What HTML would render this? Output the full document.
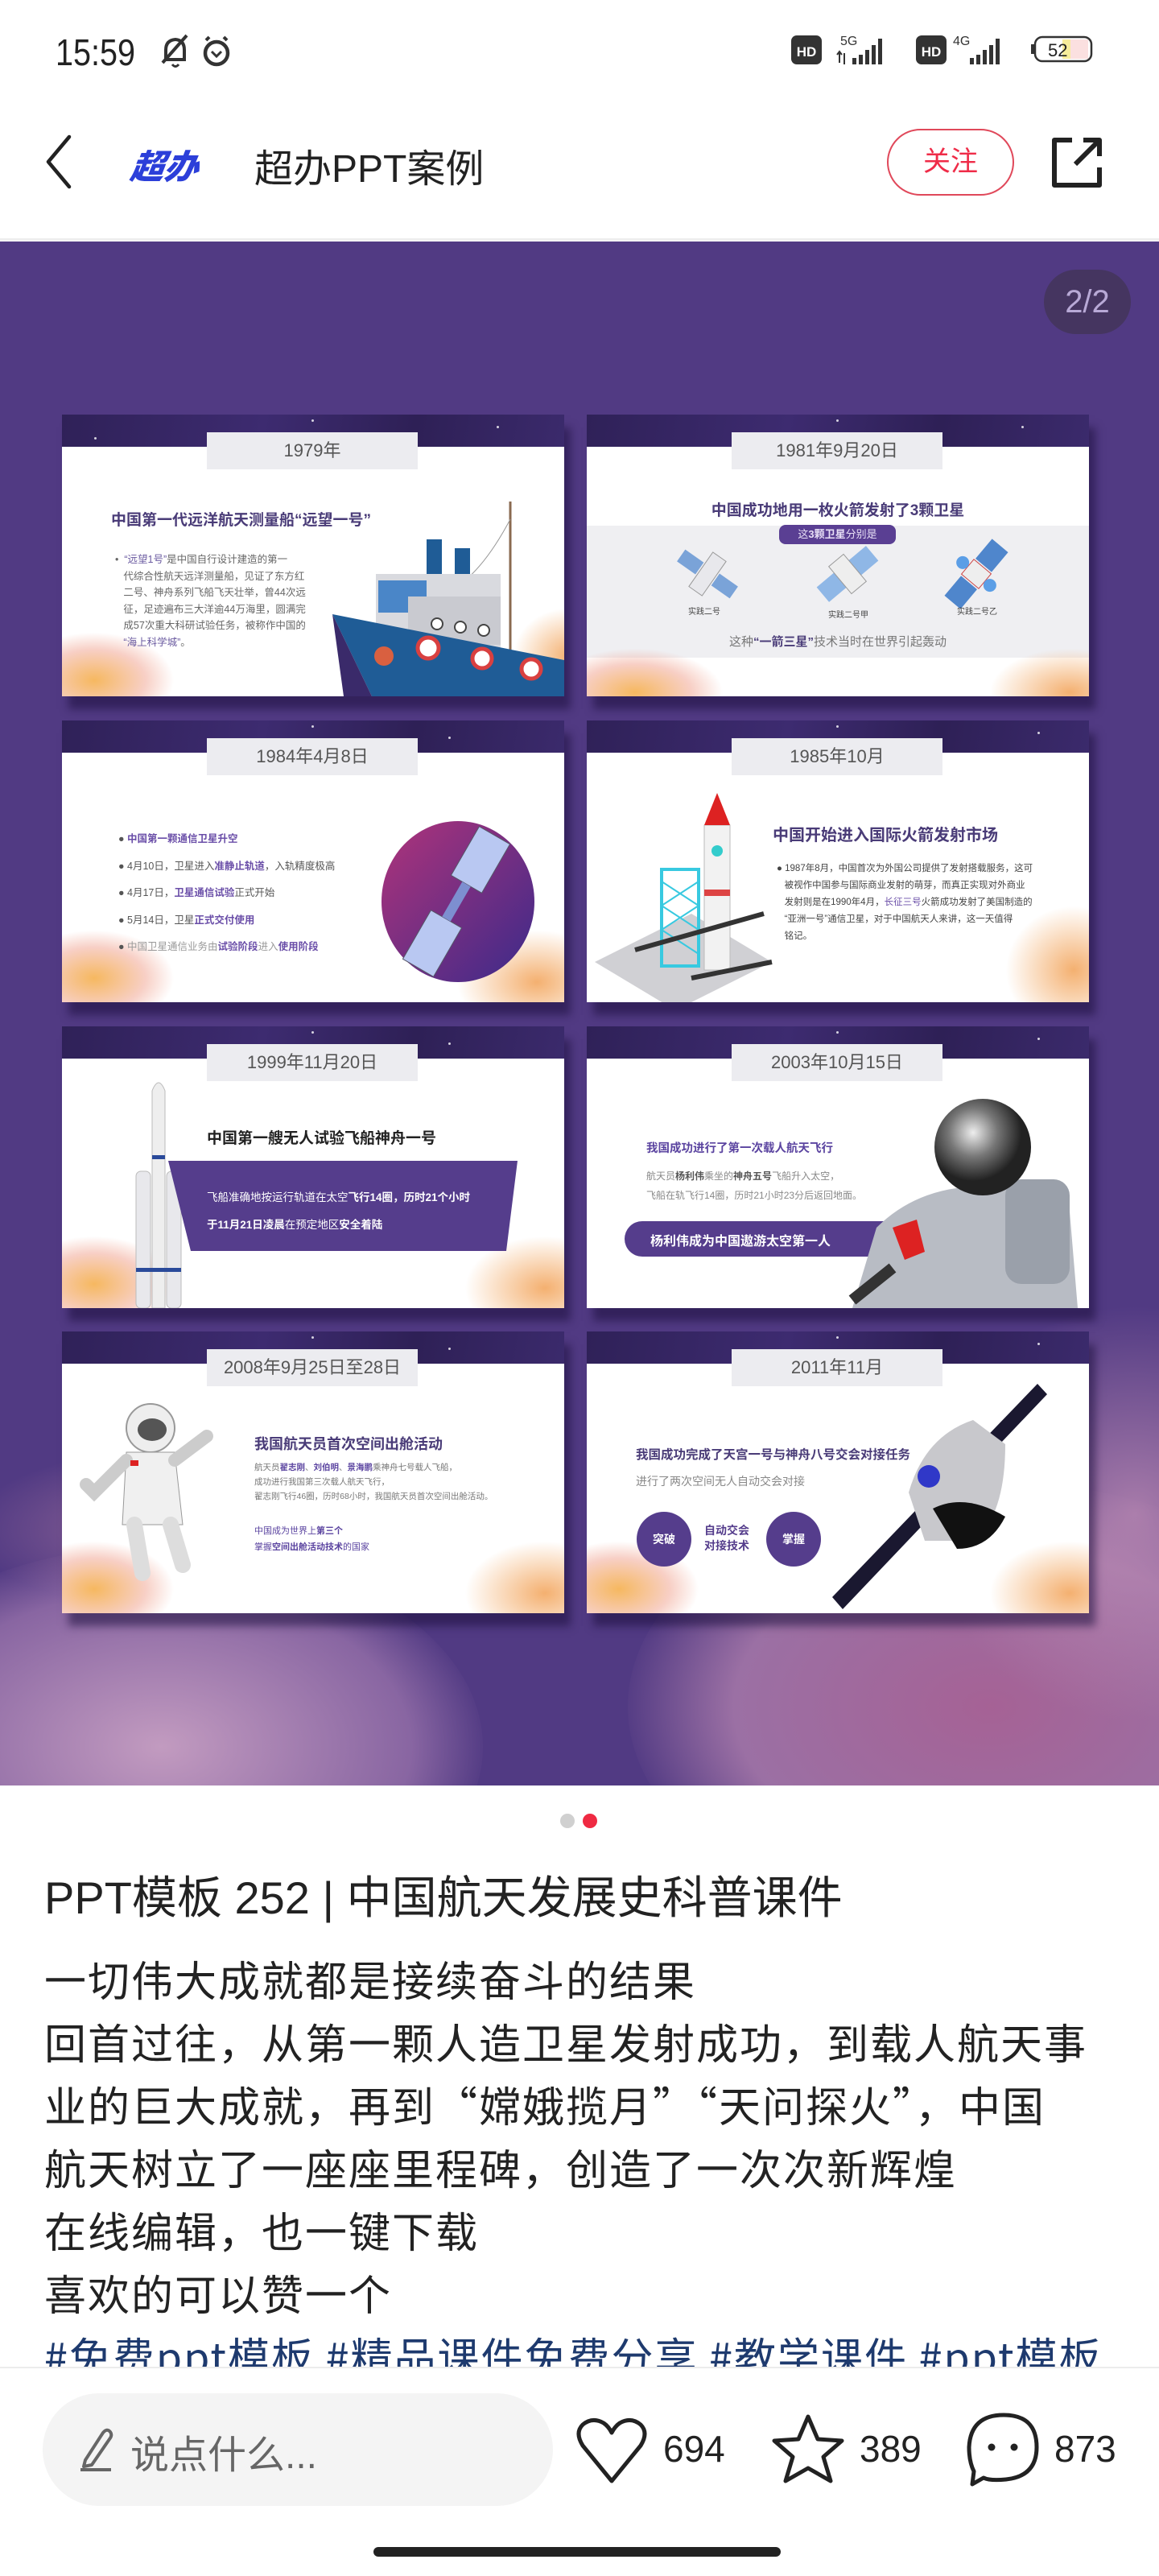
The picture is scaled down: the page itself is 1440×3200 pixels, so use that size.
<!DOCTYPE html>
<html><head><meta charset="utf-8">
<style>
*{margin:0;padding:0;box-sizing:border-box}
body{width:1440px;height:3200px;position:relative;background:#fff;font-family:"Liberation Sans","Noto Sans CJK SC",sans-serif;overflow:hidden;color:#222}
.a{position:absolute}
.s{position:absolute;width:624px;height:350px;background:#fff;box-shadow:8px 16px 10px rgba(28,14,60,.55);overflow:hidden}
.band{position:absolute;left:0;top:0;width:624px;height:40px;background:linear-gradient(100deg,#2f2158,#3d2b70 40%,#2e2056 70%,#3b2a6c)}
.st{position:absolute;width:3px;height:3px;border-radius:50%;background:#fff;opacity:.8}
.lbl{position:absolute;left:180px;top:22px;width:262px;height:46px;background:#ececf0;color:#555;font-size:22px;text-align:center;line-height:46px}
.cl{position:absolute;border-radius:50%}
.t{position:absolute;white-space:nowrap}
.pt{font-weight:bold;color:#4a3c78}
.g{color:#666}
</style></head><body>

<!-- status bar -->
<div class="t" style="left:69px;top:38px;font-size:46px;color:#222;transform:scaleX(.86);transform-origin:left">15:59</div>
<svg class="a" style="left:196px;top:40px" width="96" height="48" viewBox="0 0 96 48">
 <path d="M10 34 L10 22 Q10 10 22 9 Q33 10 33 22 L33 34 Z" fill="none" stroke="#333" stroke-width="4"/>
 <path d="M6 38 L36 4" stroke="#333" stroke-width="4"/><path d="M18 40 Q22 45 26 40" fill="none" stroke="#333" stroke-width="3"/>
 <circle cx="73" cy="26" r="14" fill="none" stroke="#333" stroke-width="4.5"/><path d="M67 24 L73 30 L79 24" fill="none" stroke="#333" stroke-width="3"/>
 <path d="M60 10 L64 6 M86 10 L82 6" stroke="#333" stroke-width="4"/>
</svg>
<svg class="a" style="left:980px;top:38px" width="390" height="50" viewBox="0 0 390 50">
 <rect x="3" y="6" width="38" height="36" rx="7" fill="#333"/><text x="22" y="32" font-size="17" font-weight="bold" fill="#fff" text-anchor="middle" font-family="Liberation Sans">HD</text>
 <text x="64" y="18" font-size="16" fill="#333" font-family="Liberation Sans">5G</text>
 <rect x="79" y="34" width="5" height="8" fill="#333"/><rect x="87" y="30" width="5" height="12" fill="#333"/><rect x="95" y="24" width="5" height="18" fill="#333"/><rect x="103" y="18" width="5" height="24" fill="#333"/><rect x="111" y="10" width="5" height="32" fill="#333"/>
 <path d="M63 26 L63 40 M60 30 L63 26 L66 30 M69 28 L69 42" stroke="#333" stroke-width="2" fill="none"/>
 <rect x="158" y="6" width="38" height="36" rx="7" fill="#333"/><text x="177" y="32" font-size="17" font-weight="bold" fill="#fff" text-anchor="middle" font-family="Liberation Sans">HD</text>
 <text x="204" y="18" font-size="16" fill="#333" font-family="Liberation Sans">4G</text>
 <rect x="225" y="34" width="5" height="8" fill="#333"/><rect x="233" y="30" width="5" height="12" fill="#333"/><rect x="241" y="24" width="5" height="18" fill="#333"/><rect x="249" y="18" width="5" height="24" fill="#333"/><rect x="257" y="10" width="5" height="32" fill="#333"/>
 <rect x="306" y="8" width="70" height="30" rx="9" fill="none" stroke="#333" stroke-width="2.5"/>
 <rect x="340" y="11" width="10" height="24" fill="#f6ec9a"/><rect x="350" y="11" width="22" height="24" fill="#fbe0e0"/>
 <rect x="301" y="17" width="4" height="12" fill="#333"/>
 <text x="322" y="32" font-size="22" fill="#222" font-family="Liberation Sans">52</text>
</svg>

<!-- nav -->
<svg class="a" style="left:50px;top:166px" width="44" height="70"><path d="M36 4 L10 35 L36 66" fill="none" stroke="#222" stroke-width="4.5" stroke-linecap="round" stroke-linejoin="round"/></svg>
<div class="t" style="left:163px;top:174px;font-size:42px;font-weight:900;font-style:italic;color:#2c3fd9;transform:skewX(-8deg)">超办</div>
<div class="t" style="left:316px;top:170px;font-size:48px;color:#222">超办PPT案例</div>
<div class="a" style="left:1102px;top:160px;width:158px;height:83px;border:2px solid #e0485a;border-radius:42px;color:#ef2c48;font-size:34px;text-align:center;line-height:79px">关注</div>
<svg class="a" style="left:1302px;top:166px" width="72" height="72" viewBox="0 0 72 72"><path d="M30 8 L8 8 L8 64 L64 64 L64 42" fill="none" stroke="#222" stroke-width="6" stroke-linejoin="round"/><path d="M34 38 L64 8 M44 8 L64 8 L64 28" fill="none" stroke="#222" stroke-width="6" stroke-linejoin="round"/></svg>
<div class="a" style="left:0;top:296px;width:1440px;height:3px;background:#eee"></div>

<!-- image -->
<div class="a" style="left:0;top:300px;width:1440px;height:1918px;background:#513a83;overflow:hidden">
 <div class="cl" style="left:-200px;top:1620px;width:800px;height:500px;background:radial-gradient(ellipse,rgba(200,160,195,.95),rgba(160,120,175,.7) 55%,rgba(81,58,131,0) 72%)"></div>
 <div class="cl" style="left:-40px;top:1500px;width:500px;height:200px;background:radial-gradient(ellipse,rgba(200,140,170,.55),rgba(81,58,131,0) 70%)"></div>
 <div class="cl" style="left:780px;top:1540px;width:900px;height:560px;background:radial-gradient(ellipse,rgba(170,100,150,.95),rgba(180,130,175,.75) 50%,rgba(81,58,131,0) 72%)"></div>
 <div class="cl" style="left:1150px;top:1320px;width:520px;height:520px;background:radial-gradient(circle,rgba(190,140,180,.8),rgba(81,58,131,0) 70%)"></div>
 <div class="a" style="left:1297px;top:35px;width:108px;height:80px;border-radius:40px;background:#453560;color:#b8a9d6;font-size:40px;text-align:center;line-height:80px">2/2</div>
</div>

<!-- slide 1 -->
<div class="s" style="left:77px;top:515px">
 <div class="band"></div><div class="st" style="left:310px;top:6px"></div><div class="st" style="left:540px;top:14px"></div><div class="st" style="left:40px;top:28px"></div>
 <div class="lbl">1979年</div>
 <div class="cl" style="left:-60px;top:270px;width:200px;height:120px;background:radial-gradient(ellipse,#f6b860,rgba(240,160,140,.5) 45%,rgba(255,255,255,0) 70%)"></div>
 <div class="cl" style="left:560px;top:240px;width:140px;height:120px;background:radial-gradient(ellipse,#f4b070,rgba(255,255,255,0) 70%)"></div>
 <div class="t pt" style="left:61px;top:116px;font-size:19px">中国第一代远洋航天测量船“远望一号”</div>
 <div class="t g" style="left:66px;top:170px;font-size:12.5px;line-height:20.5px">•&nbsp; <span style="color:#6a5aa0">“远望1号”</span>是中国自行设计建造的第一<br>&nbsp;&nbsp;&nbsp;代综合性航天远洋测量船，见证了东方红<br>&nbsp;&nbsp;&nbsp;二号、神舟系列飞船飞天壮举，曾44次远<br>&nbsp;&nbsp;&nbsp;征，足迹遍布三大洋逾44万海里，圆满完<br>&nbsp;&nbsp;&nbsp;成57次重大科研试验任务，被称作中国的<br>&nbsp;&nbsp;&nbsp;<span style="color:#6a5aa0">“海上科学城”</span>。</div>
 <svg class="a" style="left:0;top:0" width="624" height="350" viewBox="0 0 624 350">
  <line x1="557" y1="108" x2="557" y2="320" stroke="#8a6a50" stroke-width="3"/>
  <path d="M557 130 Q520 200 480 220" fill="none" stroke="#999" stroke-width="1"/>
  <rect x="453" y="155" width="19" height="65" fill="#1f5c96"/><rect x="488" y="166" width="19" height="54" fill="#1f5c96"/>
  <rect x="390" y="198" width="155" height="100" fill="#d9dadf"/>
  <rect x="393" y="206" width="60" height="40" fill="#4a86c8"/>
  <rect x="430" y="226" width="115" height="60" fill="#c9cad0"/>
  <circle cx="466" cy="260" r="7" fill="#fff" stroke="#444" stroke-width="2"/><circle cx="495" cy="264" r="7" fill="#fff" stroke="#444" stroke-width="2"/><circle cx="524" cy="268" r="7" fill="#fff" stroke="#444" stroke-width="2"/>
  <path d="M336 248 L624 305 L624 350 L385 350 Z" fill="#1f5c96"/>
  <path d="M336 248 L385 350 L350 350 Z" fill="#3a2a6a"/>
  <circle cx="455" cy="290" r="13" fill="#fff" stroke="#d94040" stroke-width="5"/><circle cx="522" cy="303" r="12" fill="#fff" stroke="#d94040" stroke-width="5"/><circle cx="583" cy="316" r="12" fill="#fff" stroke="#d94040" stroke-width="5"/>
  <circle cx="400" cy="300" r="12" fill="#d96040"/>
 </svg>
</div>

<!-- slide 2 -->
<div class="s" style="left:729px;top:515px">
 <div class="band"></div><div class="st" style="left:310px;top:6px"></div><div class="st" style="left:540px;top:14px"></div>
 <div class="lbl">1981年9月20日</div>
 <div class="t pt" style="left:0;width:624px;text-align:center;top:104px;font-size:19px">中国成功地用一枚火箭发射了3颗卫星</div>
 <div class="a" style="left:0;top:138px;width:624px;height:164px;background:#efeff2"></div>
 <div class="a" style="left:239px;top:137px;width:145px;height:24px;border-radius:8px;background:#5a3f93;color:#e8e0f6;font-size:13px;text-align:center;line-height:24px">这<b>3颗卫星</b>分别是</div>
 <svg class="a" style="left:0;top:0" width="624" height="350">
  <g transform="translate(150,198) rotate(35)"><rect x="-40" y="-9" width="28" height="18" fill="#7aa3d8"/><rect x="12" y="-9" width="28" height="18" fill="#7aa3d8"/><rect x="-10" y="-26" width="20" height="52" fill="#e8e8ec" stroke="#999"/></g>
  <g transform="translate(324,198) rotate(-40)"><rect x="-40" y="-12" width="28" height="24" fill="#8fb7e6"/><rect x="12" y="-12" width="28" height="24" fill="#8fb7e6"/><rect x="-12" y="-22" width="24" height="44" fill="#eee" stroke="#999"/></g>
  <g transform="translate(484,198) rotate(-50)"><rect x="-46" y="-13" width="32" height="26" fill="#4f86cc"/><rect x="14" y="-13" width="32" height="26" fill="#4f86cc"/><rect x="-12" y="-14" width="24" height="28" fill="#eee" stroke="#c44"/><circle cx="0" cy="-22" r="8" fill="#5b9ee6"/><circle cx="0" cy="22" r="8" fill="#5b9ee6"/></g>
 </svg>
 <div class="t" style="left:126px;top:236px;font-size:10px;color:#444">实践二号</div>
 <div class="t" style="left:300px;top:240px;font-size:10px;color:#444">实践二号甲</div>
 <div class="t" style="left:460px;top:236px;font-size:10px;color:#444">实践二号乙</div>
 <div class="t" style="left:0;width:624px;text-align:center;top:271px;font-size:15px;color:#777">这种<b style="color:#4a3c78">“一箭三星”</b>技术当时在世界引起轰动</div>
 <div class="cl" style="left:-50px;top:290px;width:220px;height:110px;background:radial-gradient(ellipse,#f6b860,rgba(240,160,140,.5) 45%,rgba(255,255,255,0) 70%)"></div>
 <div class="cl" style="left:500px;top:290px;width:200px;height:110px;background:radial-gradient(ellipse,#f4b070,rgba(255,255,255,0) 70%)"></div>
</div>

<!-- slide 3 -->
<div class="s" style="left:77px;top:895px">
 <div class="band"></div><div class="st" style="left:310px;top:6px"></div><div class="st" style="left:480px;top:20px"></div>
 <div class="lbl">1984年4月8日</div>
 <div class="cl" style="left:-60px;top:260px;width:200px;height:120px;background:radial-gradient(ellipse,#f6b860,rgba(240,160,140,.5) 45%,rgba(255,255,255,0) 70%)"></div>
 <div class="cl" style="left:490px;top:260px;width:200px;height:130px;background:radial-gradient(ellipse,#f4b070,rgba(255,255,255,0) 70%)"></div>
 <div class="t" style="left:70px;top:131px;font-size:12.5px;line-height:33.5px;color:#555">
  ● <b style="color:#6a4ea8">中国第一颗通信卫星升空</b><br>● 4月10日，卫星进入<b style="color:#6a4ea8">准静止轨道</b>，入轨精度极高<br>● 4月17日，<b style="color:#6a4ea8">卫星通信试验</b>正式开始<br>● 5月14日，卫星<b style="color:#6a4ea8">正式交付使用</b><br>● <span style="color:#999">中国卫星通信业务由</span><b style="color:#6a4ea8">试验阶段</b><span style="color:#999">进入</span><b style="color:#6a4ea8">使用阶段</b></div>
 <svg class="a" style="left:0;top:0" width="624" height="350">
  <defs><linearGradient id="pg" x1="0" y1="0" x2="1" y2="1"><stop offset="0" stop-color="#b0337a"/><stop offset="1" stop-color="#3b2a8a"/></linearGradient></defs>
  <ellipse cx="492" cy="225" rx="95" ry="100" fill="url(#pg)"/>
  <g transform="translate(490,225) rotate(-60)"><rect x="-95" y="-22" width="70" height="44" fill="#b9c8f2" stroke="#556" /><rect x="25" y="-22" width="70" height="44" fill="#b9c8f2" stroke="#556"/><rect x="-25" y="-6" width="50" height="12" fill="#7d8fd0"/></g>
 </svg>
</div>

<!-- slide 4 -->
<div class="s" style="left:729px;top:895px">
 <div class="band"></div><div class="st" style="left:310px;top:6px"></div><div class="st" style="left:560px;top:14px"></div>
 <div class="lbl">1985年10月</div>
 <div class="cl" style="left:520px;top:230px;width:170px;height:160px;background:radial-gradient(ellipse,#f4b070,rgba(255,255,255,0) 70%)"></div>
 <svg class="a" style="left:0;top:0" width="624" height="350">
  <path d="M10 300 L130 240 L230 300 L110 360 Z" fill="#d0d0d4"/>
  <rect x="93" y="185" width="46" height="120" fill="none" stroke="#38c9e0" stroke-width="4"/>
  <path d="M93 200 L139 230 M93 230 L139 260 M93 260 L139 290 M139 200 L93 230 M139 230 L93 260" stroke="#38c9e0" stroke-width="2"/>
  <rect x="146" y="130" width="32" height="180" fill="#f2f2f2" stroke="#bbb"/>
  <path d="M146 130 L162 90 L178 130 Z" fill="#d22"/>
  <circle cx="162" cy="162" r="7" fill="#3cc"/><rect x="146" y="210" width="32" height="8" fill="#d44"/>
  <path d="M60 285 L220 240" stroke="#333" stroke-width="6"/><path d="M130 320 L230 300" stroke="#333" stroke-width="6"/>
 </svg>
 <div class="t pt" style="left:231px;top:126px;font-size:20px">中国开始进入国际火箭发射市场</div>
 <div class="t" style="left:236px;top:174px;font-size:11.5px;line-height:21px;color:#444">● 1987年8月，中国首次为外国公司提供了发射搭载服务，这可<br>&nbsp;&nbsp;&nbsp;被视作中国参与国际商业发射的萌芽，而真正实现对外商业<br>&nbsp;&nbsp;&nbsp;发射则是在1990年4月，<span style="color:#6a4ea8">长征三号</span>火箭成功发射了美国制造的<br>&nbsp;&nbsp;&nbsp;“亚洲一号”通信卫星，对于中国航天人来讲，这一天值得<br>&nbsp;&nbsp;&nbsp;铭记。</div>
</div>

<!-- slide 5 -->
<div class="s" style="left:77px;top:1275px">
 <div class="band"></div><div class="st" style="left:310px;top:6px"></div><div class="st" style="left:480px;top:20px"></div>
 <div class="lbl">1999年11月20日</div>
 <div class="cl" style="left:-60px;top:260px;width:200px;height:120px;background:radial-gradient(ellipse,#f6b860,rgba(240,160,140,.5) 45%,rgba(255,255,255,0) 70%)"></div>
 <div class="cl" style="left:500px;top:260px;width:200px;height:130px;background:radial-gradient(ellipse,#f4b070,rgba(255,255,255,0) 70%)"></div>
 <svg class="a" style="left:0;top:0" width="624" height="350">
  <path d="M112 80 Q120 60 128 80 L128 350 L112 350 Z" fill="#eee" stroke="#bbb"/>
  <rect x="92" y="180" width="18" height="170" rx="6" fill="#e8e8ec" stroke="#bbb"/><rect x="130" y="180" width="18" height="170" rx="6" fill="#e8e8ec" stroke="#bbb"/>
  <rect x="112" y="160" width="16" height="5" fill="#2a4a9a"/><rect x="92" y="300" width="56" height="5" fill="#2a4a9a"/>
  <path d="M132 167 L566 167 L552 279 L160 279 Z" fill="#553d8c"/>
 </svg>
 <div class="t" style="left:180px;top:124px;font-size:19px;font-weight:bold;color:#222">中国第一艘无人试验飞船神舟一号</div>
 <div class="t" style="left:180px;top:196px;font-size:13.5px;line-height:34px;color:#fff">飞船准确地按运行轨道在太空<b>飞行14圈，历时21个小时</b><br><b>于11月21日凌晨</b>在预定地区<b>安全着陆</b></div>
</div>

<!-- slide 6 -->
<div class="s" style="left:729px;top:1275px">
 <div class="band"></div><div class="st" style="left:310px;top:6px"></div><div class="st" style="left:560px;top:14px"></div>
 <div class="lbl">2003年10月15日</div>
 <div class="t pt" style="left:74px;top:140px;font-size:14.5px;color:#5b44a0">我国成功进行了第一次载人航天飞行</div>
 <div class="t" style="left:74px;top:174px;font-size:12px;line-height:24px;color:#888">航天员<b style="color:#555">杨利伟</b>乘坐的<b style="color:#555">神舟五号</b>飞船升入太空，<br>飞船在轨飞行14圈，历时21小时23分后返回地面。</div>
 <div class="a" style="left:47px;top:242px;width:372px;height:44px;border-radius:22px;background:#553d8c"></div>
 <div class="t" style="left:79px;top:253px;font-size:16px;color:#fff;font-weight:bold">杨利伟成为中国遨游太空第一人</div>
 <svg class="a" style="left:0;top:0" width="624" height="350">
  <defs><radialGradient id="hg" cx=".4" cy=".35"><stop offset="0" stop-color="#eee"/><stop offset=".5" stop-color="#777"/><stop offset="1" stop-color="#222"/></radialGradient></defs>
  <path d="M330 350 L360 250 Q420 190 520 200 L600 230 L610 350 Z" fill="#b8bcc4"/>
  <rect x="520" y="190" width="80" height="130" rx="20" fill="#9aa0aa"/>
  <path d="M380 250 L410 240 L420 280 L395 290 Z" fill="#d22"/>
  <circle cx="492" cy="150" r="60" fill="url(#hg)"/>
  <path d="M330 340 L380 300" stroke="#333" stroke-width="14"/>
 </svg>
</div>

<!-- slide 7 -->
<div class="s" style="left:77px;top:1654px">
 <div class="band"></div><div class="st" style="left:310px;top:6px"></div><div class="st" style="left:480px;top:20px"></div>
 <div class="lbl">2008年9月25日至28日</div>
 <div class="cl" style="left:-60px;top:260px;width:200px;height:120px;background:radial-gradient(ellipse,#f6b860,rgba(240,160,140,.5) 45%,rgba(255,255,255,0) 70%)"></div>
 <div class="cl" style="left:500px;top:260px;width:200px;height:130px;background:radial-gradient(ellipse,#f4b070,rgba(255,255,255,0) 70%)"></div>
 <svg class="a" style="left:0;top:0" width="624" height="350">
  <circle cx="110" cy="120" r="30" fill="#eee" stroke="#999" stroke-width="2"/><ellipse cx="112" cy="122" rx="18" ry="14" fill="#555"/>
  <path d="M80 150 L140 150 L150 240 L75 240 Z" fill="#f0f0f0" stroke="#999"/>
  <path d="M80 160 L40 200 L30 190 M140 160 L180 130" stroke="#ccc" stroke-width="16" fill="none" stroke-linecap="round"/>
  <path d="M90 240 L100 300 M135 240 L150 290" stroke="#ddd" stroke-width="20" stroke-linecap="round"/>
  <rect x="85" y="160" width="10" height="7" fill="#d22"/>
 </svg>
 <div class="t pt" style="left:239px;top:126px;font-size:18px">我国航天员首次空间出舱活动</div>
 <div class="t" style="left:239px;top:160px;font-size:10.5px;line-height:18px;color:#777">航天员<b style="color:#5b44a0">翟志刚</b>、<b style="color:#5b44a0">刘伯明</b>、<b style="color:#5b44a0">景海鹏</b>乘神舟七号载人飞船，<br>成功进行我国第三次载人航天飞行，<br>翟志刚飞行46圈，历时68小时，我国航天员首次空间出舱活动。</div>
 <div class="t" style="left:239px;top:238px;font-size:11px;line-height:20px;color:#5b44a0">中国成为世界上<b>第三个</b><br>掌握<b>空间出舱活动技术</b>的国家</div>
</div>

<!-- slide 8 -->
<div class="s" style="left:729px;top:1654px">
 <div class="band"></div><div class="st" style="left:310px;top:6px"></div><div class="st" style="left:560px;top:14px"></div>
 <div class="lbl">2011年11月</div>
 <div class="cl" style="left:-60px;top:260px;width:200px;height:120px;background:radial-gradient(ellipse,#f6b860,rgba(240,160,140,.5) 45%,rgba(255,255,255,0) 70%)"></div>
 <div class="cl" style="left:500px;top:260px;width:200px;height:130px;background:radial-gradient(ellipse,#f4b070,rgba(255,255,255,0) 70%)"></div>
 <div class="t pt" style="left:61px;top:141px;font-size:15.5px">我国成功完成了天宫一号与神舟八号交会对接任务</div>
 <div class="t" style="left:61px;top:176px;font-size:14px;color:#888">进行了两次空间无人自动交会对接</div>
 <div class="a" style="left:62px;top:224px;width:68px;height:68px;border-radius:50%;background:#553d8c;color:#fff;font-size:14px;font-weight:bold;text-align:center;line-height:68px">突破</div>
 <div class="t" style="left:146px;top:238px;font-size:14px;line-height:19px;font-weight:bold;color:#553d8c">自动交会<br>对接技术</div>
 <div class="a" style="left:223px;top:224px;width:68px;height:68px;border-radius:50%;background:#553d8c;color:#fff;font-size:14px;font-weight:bold;text-align:center;line-height:68px">掌握</div>
 <svg class="a" style="left:0;top:0" width="624" height="350">
  <path d="M305 330 L560 65 L572 78 L318 345 Z" fill="#1a1830"/>
  <path d="M400 200 Q420 130 480 110 L520 140 Q520 230 480 260 L420 260 Z" fill="#c8c8cc"/>
  <path d="M430 220 Q470 200 520 230 Q500 270 460 270 Z" fill="#111"/>
  <circle cx="425" cy="180" r="14" fill="#3038c8"/>
 </svg>
</div>

<!-- dots -->
<div class="a" style="left:696px;top:2253px;width:18px;height:18px;border-radius:50%;background:#d0d0d0"></div>
<div class="a" style="left:724px;top:2253px;width:18px;height:18px;border-radius:50%;background:#ef2a42"></div>

<!-- text -->
<div class="t" style="left:55px;top:2322px;font-size:56px;line-height:72px;color:#222">PPT模板 252 | 中国航天发展史科普课件</div>
<div class="a" style="left:55px;top:2419px;width:1385px;height:522px;overflow:hidden;font-family:'Noto Sans CJK SC','Liberation Sans',sans-serif;font-size:52px;line-height:78px;letter-spacing:2px;color:#222;white-space:nowrap">一切伟大成就都是接续奋斗的结果<br>回首过往，从第一颗人造卫星发射成功，到载人航天事<br>业的巨大成就，再到“嫦娥揽月”“天问探火”，中国<br>航天树立了一座座里程碑，创造了一次次新辉煌<br>在线编辑，也一键下载<br>喜欢的可以赞一个<br><span style="color:#1e3a6e">#免费ppt模板 #精品课件免费分享 #教学课件 #ppt模板</span></div>
<div class="a" style="left:0;top:2940px;width:1440px;height:2px;background:#ececec"></div>

<!-- bottom bar -->
<div class="a" style="left:53px;top:2973px;width:634px;height:140px;border-radius:70px;background:#f4f4f4"></div>
<svg class="a" style="left:98px;top:3012px" width="44" height="60" viewBox="0 0 44 60"><path d="M8 44 L30 10 Q35 4 39 9 Q42 13 38 18 L16 50 L6 52 Z" fill="none" stroke="#666" stroke-width="4" stroke-linejoin="round"/><path d="M2 56 L40 56" stroke="#666" stroke-width="4"/></svg>
<div class="t" style="left:162px;top:3010px;font-size:48px;color:#666">说点什么...</div>
<svg class="a" style="left:714px;top:3000px" width="92" height="88" viewBox="0 0 92 88"><path d="M46 82 L10 38 Q0 22 10 12 Q22 2 36 10 Q42 14 46 22 Q50 14 56 10 Q70 2 82 12 Q92 22 82 38 Z" fill="none" stroke="#222" stroke-width="5" stroke-linejoin="round"/></svg>
<div class="t" style="left:824px;top:3015px;font-size:46px;color:#222">694</div>
<svg class="a" style="left:956px;top:2996px" width="96" height="94" viewBox="0 0 96 94"><path d="M48 6 L60 34 L90 36 L67 56 L76 86 L48 70 L20 86 L29 56 L6 36 L36 34 Z" fill="none" stroke="#222" stroke-width="5" stroke-linejoin="round"/></svg>
<div class="t" style="left:1068px;top:3015px;font-size:46px;color:#222">389</div>
<svg class="a" style="left:1200px;top:2994px" width="94" height="98" viewBox="0 0 94 98"><path d="M47 6 Q88 6 88 46 Q88 82 50 86 Q30 88 22 84 L8 92 L10 76 Q4 64 4 46 Q6 6 47 6 Z" fill="none" stroke="#222" stroke-width="5" stroke-linejoin="round"/><circle cx="32" cy="46" r="4.5" fill="#222"/><circle cx="60" cy="46" r="4.5" fill="#222"/></svg>
<div class="t" style="left:1310px;top:3015px;font-size:46px;color:#222">873</div>

<div class="a" style="left:464px;top:3164px;width:506px;height:12px;border-radius:6px;background:#222"></div>
</body></html>
